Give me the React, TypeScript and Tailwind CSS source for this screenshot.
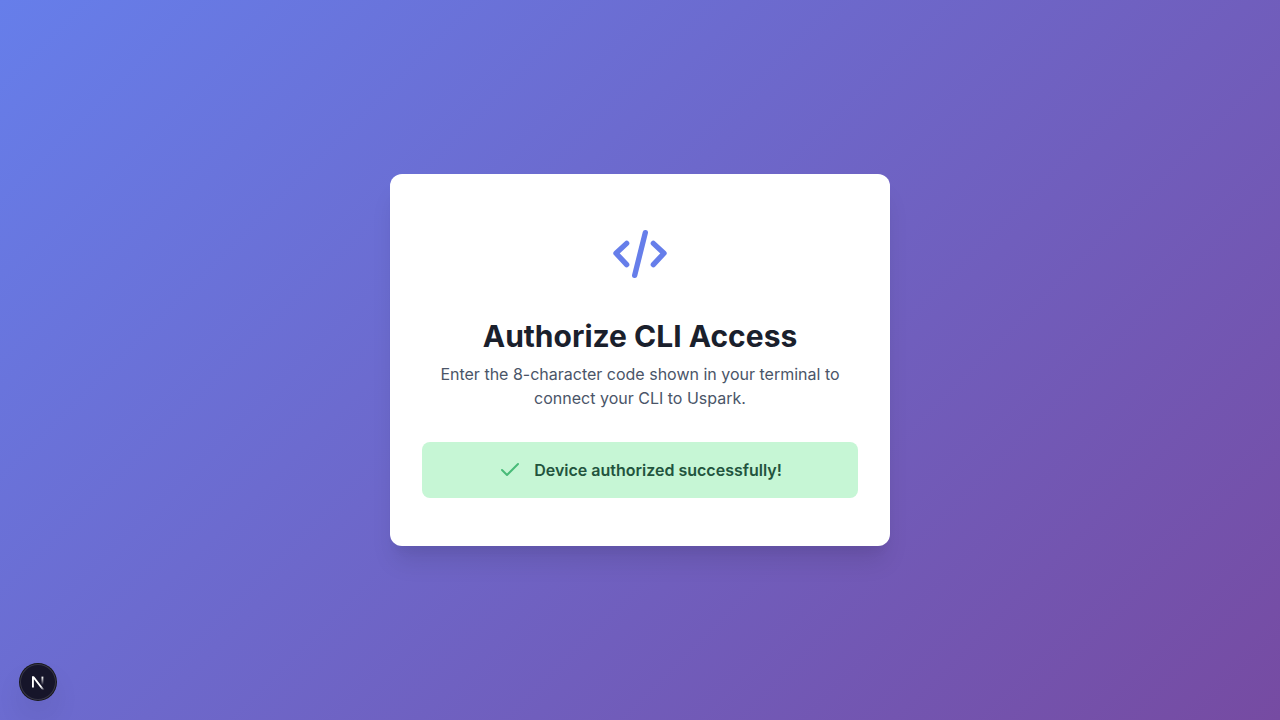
export default function App() {
  return (
    <main className="flex min-h-screen items-center justify-center bg-[linear-gradient(135deg,#667eea_0%,#764ba2_100%)] p-4 font-['Inter',sans-serif] antialiased">
      <section className="w-full max-w-[500px] rounded-xl bg-white px-8 py-12 shadow-[0_20px_25px_-5px_rgba(0,0,0,0.1),0_10px_10px_-5px_rgba(0,0,0,0.04)]">
        <header className="mb-8 text-center">
          <div className="mb-8 flex justify-center">
            <svg className="size-16 text-[#667eea]" viewBox="0 0 24 24" fill="none" stroke="currentColor" strokeWidth="2" strokeLinecap="round" strokeLinejoin="round" aria-hidden="true">
              <path d="M7 8l-4 3.7L7 16M17 8l4 3.7-4 4.3M14 4l-4 16" />
            </svg>
          </div>
          <h1 className="mb-2 text-3xl leading-9 font-bold text-[#1a202c]">Authorize CLI Access</h1>
          <p className="text-base leading-6 text-[#4a5568]">
            Enter the 8-character code shown in your terminal to connect your CLI to Uspark.
          </p>
        </header>
        <div role="status" className="flex items-center justify-center gap-3 rounded-lg bg-[#c6f6d5] p-4 text-base leading-6 font-semibold text-[#22543d]">
          <svg className="size-6 text-[#48bb78]" viewBox="0 0 24 24" fill="none" stroke="currentColor" strokeWidth="2" strokeLinecap="round" strokeLinejoin="round" aria-hidden="true">
            <path d="M4 12l5 5L20 6" />
          </svg>
          <span>Device authorized successfully!</span>
        </div>
      </section>
      <button type="button" aria-label="Open Next.js Dev Tools" className="fixed bottom-5 left-5 flex size-9 items-center justify-center rounded-full bg-[#16152a] shadow-[0_0_0_1px_#171717,inset_0_0_0_1px_rgba(255,255,255,0.14),0_16px_32px_-8px_rgba(0,0,0,0.24)]">
        <svg className="size-9" viewBox="0 0 36 36" fill="none" aria-hidden="true">
          <defs>
            <linearGradient id="diagonal" x1="9.95" y1="11.13" x2="14" y2="16.2" gradientUnits="userSpaceOnUse">
              <stop stopColor="white" />
              <stop offset="1" stopColor="white" stopOpacity="0" />
            </linearGradient>
            <linearGradient id="stem" x1="11.82" y1="1.4" x2="11.82" y2="9.6" gradientUnits="userSpaceOnUse">
              <stop stopColor="white" />
              <stop offset="1" stopColor="white" stopOpacity="0" />
            </linearGradient>
            <clipPath id="mark">
              <path d="M0 0.9H14V14H0Z" />
            </clipPath>
          </defs>
          <g transform="translate(10.6 11.4)" strokeWidth="1.86" clipPath="url(#mark)">
            <path d="M13.3 15.2L2.34 1V12.1" stroke="url(#diagonal)" />
            <path d="M11.825 1.1V12.1" stroke="url(#stem)" />
          </g>
        </svg>
      </button>
    </main>
  );
}
